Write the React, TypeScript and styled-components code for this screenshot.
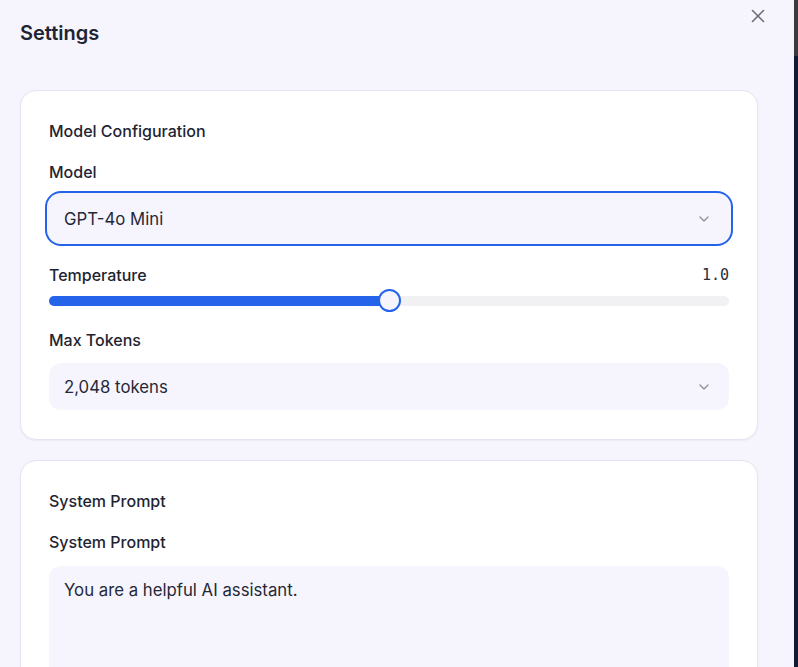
import React from "react";
import styled, { createGlobalStyle } from "styled-components";
import { X, ChevronDown } from "lucide-react";

const Global = createGlobalStyle`
  html, body { margin: 0; padding: 0; background: #f6f5fd; }
  body { font-family: Inter, "Noto Sans", sans-serif; color: #1f2433; overflow: hidden; }
  * { box-sizing: border-box; }
`;

const Screen = styled.div`
  display: flex;
  width: 798px;
  height: 667px;
  overflow: hidden;
`;

const Panel = styled.div`
  position: relative;
  flex: 1;
  background: #f6f5fd;
  padding: 20px 36px 0 20px;
  overflow: hidden;
`;

const Edge = styled.div`
  width: 4px;
  display: flex;
  flex-direction: column;
`;

const EdgePart = styled.div<{ $top?: boolean }>`
  height: ${(p) => (p.$top ? "56px" : "auto")};
  flex: ${(p) => (p.$top ? "none" : "1")};
  background: ${(p) => (p.$top ? "#3a3a3c" : "#0f1a36")};
`;

const Title = styled.h1`
  margin: 0;
  font-size: 20px;
  line-height: 26px;
  font-weight: 600;
  color: #1f2433;
`;

const CloseButton = styled.button`
  position: absolute;
  top: 5px;
  left: 747px;
  width: 22px;
  height: 22px;
  padding: 0;
  border: none;
  background: transparent;
  color: #6b6b78;
  display: flex;
  align-items: center;
  justify-content: center;
`;

const Stack = styled.div`
  display: flex;
  flex-direction: column;
  gap: 20px;
  margin-top: 44px;
`;

const Card = styled.section`
  background: #ffffff;
  border: 1px solid #e6e4ef;
  border-radius: 16px;
  box-shadow: 0 1px 2px rgba(30, 20, 80, 0.05);
  padding: 28px 28px 29px;
  display: flex;
  flex-direction: column;
`;

const CardHeading = styled.h2`
  margin: 0 0 18px;
  font-size: 16px;
  line-height: 24px;
  font-weight: 500;
  color: #1f2433;
`;

const Label = styled.label`
  display: block;
  font-size: 16px;
  line-height: 22px;
  font-weight: 500;
  color: #1f2433;
  margin-bottom: 12px;
`;

const Select = styled.div<{ $focused?: boolean }>`
  height: 47px;
  border-radius: 12px;
  background: #f6f5fd;
  display: flex;
  align-items: center;
  justify-content: space-between;
  padding: 0 17px 0 15px;
  font-size: 16.75px;
  color: #252837;
  box-shadow: ${(p) =>
    p.$focused ? "0 0 0 2px #f6f5fd, 0 0 0 4px #2563eb" : "none"};
  svg { color: #8f8e9c; }
`;

const Row = styled.div`
  display: flex;
  justify-content: space-between;
  align-items: center;
  margin-top: 22px;
`;

const RowLabel = styled(Label)`
  margin-bottom: 0;
`;

const Value = styled.span`
  font-family: "DejaVu Sans Mono", "Liberation Mono", monospace;
  font-size: 15px;
  color: #2a2d3a;
`;

const Track = styled.div`
  position: relative;
  height: 10px;
  margin-top: 10px;
  border-radius: 5px;
  background: #f1f1f4;
`;

const Fill = styled.div`
  position: absolute;
  left: 0;
  top: 0;
  bottom: 0;
  border-radius: 5px;
  background: #2563eb;
`;

const Thumb = styled.div`
  position: absolute;
  top: 50%;
  width: 23px;
  height: 23px;
  margin-left: -11.5px;
  margin-top: -12px;
  border-radius: 50%;
  background: #f6f5fd;
  border: 2px solid #2563eb;
`;

const Spacer = styled.div<{ $h: number }>`
  height: ${(p) => p.$h}px;
`;

const TextArea = styled.div`
  height: 140px;
  margin-top: 1px;
  border-radius: 12px;
  background: #f6f5fd;
  padding: 12px 15px;
  font-size: 16.75px;
  line-height: 24px;
  color: #252837;
`;

export default function App() {
  const temp = 1.0;
  const pct = (temp / 2) * 100;
  return (
    <Screen>
      <Global />
      <Panel>
        <Title>Settings</Title>
        <CloseButton aria-label="Close">
          <X size={22} strokeWidth={1.7} />
        </CloseButton>
        <Stack>
          <Card>
            <CardHeading>Model Configuration</CardHeading>
            <Label>Model</Label>
            <Select $focused>
              <span>GPT-4o Mini</span>
              <ChevronDown size={16} strokeWidth={2} />
            </Select>
            <Row>
              <RowLabel>Temperature</RowLabel>
              <Value>1.0</Value>
            </Row>
            <Track>
              <Fill style={{ width: `${pct}%` }} />
              <Thumb style={{ left: `${pct}%` }} />
            </Track>
            <Spacer $h={23} />
            <Label>Max Tokens</Label>
            <Select>
              <span>2,048 tokens</span>
              <ChevronDown size={16} strokeWidth={2} />
            </Select>
          </Card>
          <Card>
            <CardHeading>System Prompt</CardHeading>
            <Label>System Prompt</Label>
            <TextArea>You are a helpful AI assistant.</TextArea>
          </Card>
        </Stack>
      </Panel>
      <Edge>
        <EdgePart $top />
        <EdgePart />
      </Edge>
    </Screen>
  );
}
